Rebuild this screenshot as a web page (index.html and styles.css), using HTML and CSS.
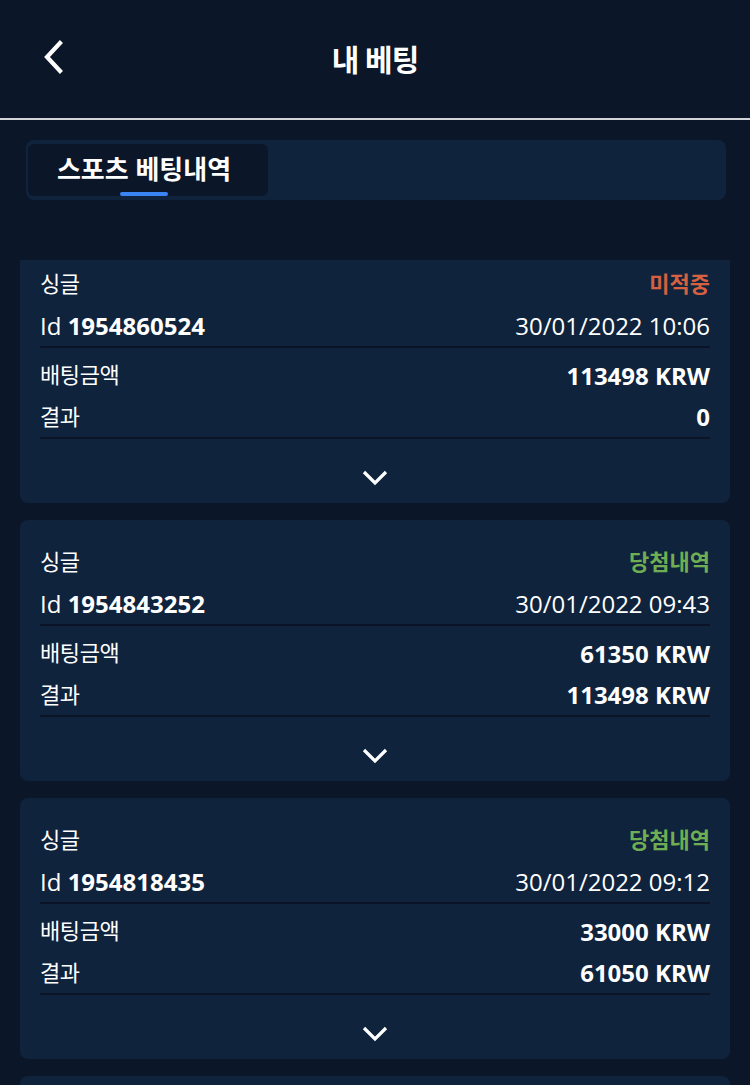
FILE: index.html
```html
<!DOCTYPE html>
<html lang="ko">
<head>
    <meta charset="UTF-8">
    <meta name="viewport" content="width=device-width, initial-scale=1.0">
    <title>내 베팅</title>
    <link rel="stylesheet" href="styles.css">
</head>
<body>
    <div class="app">
        <div class="header">
            <button class="back-btn" aria-label="뒤로">
                <svg width="24" height="34" viewBox="0 0 24 34"><path d="M19 3 L6 17 L19 31" fill="none" stroke="#fff" stroke-width="4.2" stroke-linecap="square"/></svg>
            </button>
            <h1>내 베팅</h1>
        </div>

        <div class="tabs">
            <div class="tab active">스포츠 베팅내역</div>
        </div>

        <div class="bet-list" id="betList"></div>
    </div>

    <script>
        // 베팅 내역 데이터
        const bets = [
            { id: '1954860524', date: '30/01/2022 10:06', amount: '113498 KRW', result: '0', status: 'lost' },
            { id: '1954843252', date: '30/01/2022 09:43', amount: '61350 KRW', result: '113498 KRW', status: 'won' },
            { id: '1954818435', date: '30/01/2022 09:12', amount: '33000 KRW', result: '61050 KRW', status: 'won' },
            { id: '1954790116', date: '30/01/2022 08:37', amount: '30000 KRW', result: '61350 KRW', status: 'won' }
        ];

        const statusText = { lost: '미적중', won: '당첨내역' };

        let html = '';
        bets.forEach(bet => {
            html += `
                <div class="bet-card">
                    <div class="row">
                        <span class="ko">싱글</span>
                        <span class="status ko ${bet.status}">${statusText[bet.status]}</span>
                    </div>
                    <div class="row line">
                        <span>Id <b>${bet.id}</b></span>
                        <span>${bet.date}</span>
                    </div>
                    <div class="row gap">
                        <span class="ko">배팅금액</span>
                        <b>${bet.amount}</b>
                    </div>
                    <div class="row line">
                        <span class="ko">결과</span>
                        <b>${bet.result}</b>
                    </div>
                    <div class="more">
                        <svg width="26" height="16" viewBox="0 0 26 16"><path d="M2 2 L13 13 L24 2" fill="none" stroke="#fff" stroke-width="3.2"/></svg>
                    </div>
                </div>
            `;
        });

        const list = document.getElementById('betList');
        list.innerHTML = html;
        list.scrollTop = 18;
    </script>
</body>
</html>
```

FILE: styles.css
```css
* {
    box-sizing: border-box;
}

body {
    margin: 0;
    background: #0b1729;
    color: #fff;
    font-family: 'Open Sans', 'Noto Sans CJK KR', sans-serif;
}

.app {
    height: 100vh;
    display: flex;
    flex-direction: column;
}

.header {
    height: 120px;
    display: flex;
    align-items: center;
    justify-content: center;
    position: relative;
    border-bottom: 2px solid #d2d4d8;
    flex-shrink: 0;
}

.header h1 {
    margin: 0;
    font-size: 30px;
    font-weight: bold;
    letter-spacing: -1px;
    padding-bottom: 2px;
}

.back-btn {
    position: absolute;
    left: 41px;
    top: 40px;
    background: none;
    border: none;
    padding: 0;
    display: flex;
}

.tabs {
    margin: 20px 24px 60px 26px;
    height: 60px;
    background: #10233d;
    border-radius: 8px;
    padding: 4px 2px;
    display: flex;
    flex-shrink: 0;
}

.tab {
    width: 240px;
    background: #0b1628;
    border-radius: 6px;
    font-size: 26px;
    font-weight: bold;
    display: flex;
    align-items: center;
    justify-content: center;
    padding: 0 8px 4px 0;
    position: relative;
}

.tab.active::after {
    content: '';
    position: absolute;
    left: 92px;
    bottom: 0;
    width: 48px;
    height: 4px;
    border-radius: 2px;
    background: #3b84f3;
}

.bet-list {
    flex: 1;
    overflow: hidden;
    padding: 0 20px;
    display: flex;
    flex-direction: column;
    gap: 17px;
}

.bet-card {
    background: #10233d;
    border-radius: 8px;
    padding: 21px 20px 18px;
    flex-shrink: 0;
}

.row {
    display: flex;
    justify-content: space-between;
    align-items: center;
    height: 42px;
    font-size: 24px;
}

.row b {
    font-weight: bold;
}

.row.line {
    height: 43px;
    border-bottom: 2px solid #0a1426;
}

.row.gap {
    margin-top: 6px;
}

.ko {
    font-size: 22px;
    letter-spacing: -0.4px;
    margin-bottom: 4px;
}

.status {
    font-weight: bold;
    letter-spacing: 0;
}

.status.lost { color: #d6603f; }
.status.won { color: #6fae52; }

.more {
    display: flex;
    justify-content: center;
    padding-top: 31px;
    height: 46px;
}
```
